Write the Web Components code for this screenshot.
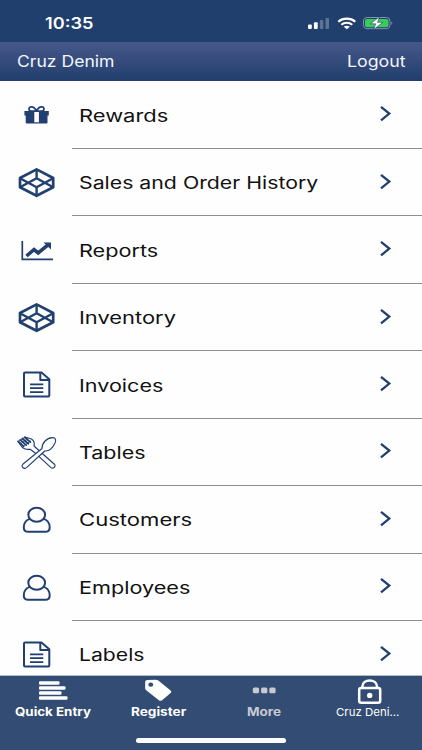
<!DOCTYPE html>
<html lang="en">
<head>
<meta charset="utf-8">
<meta name="viewport" content="width=device-width, initial-scale=1">
<title>More</title>
<style>
  body {
    margin: 0;
    background: #fefefe;
    font-family: Inter, "Liberation Sans", sans-serif;
  }
</style>
</head>
<body>
<pos-app></pos-app>

<script>
const icons = {
  gift: `<path fill="currentColor" d="M8.4 17h24.4v4.500H31.500v7a1 1 0 0 1-1 1h-19.800a1 1 0 0 1-1-1v-7H8.400z"/>
    <path fill="#fff" d="M18.300 17.800h4.600v10.500h-4.600z"/>
    <path fill="none" stroke="currentColor" stroke-width="1.800" d="M20.500 17.300c-1.500-3.500-3.500-4.600-5.500-4.400-2.500.3-2.800 3.500-.2 4.200h5.700M20.500 17.300c1.500-3.500 3.500-4.600 5.500-4.400 2.500.3 2.800 3.500.2 4.200h-5.700"/>`,
  box: `<g fill="none" stroke="currentColor" stroke-width="2.700" stroke-linejoin="round"><path d="M20.600 8.400 37.200 17v9.300L20.600 34.800 4 26.300V17z"/>
    <path stroke-width="2.400" d="M20.600 9v8.300M20.600 26.300v8M4 17.300l16.600 9 16.600-9M4 26.300l16.600-9 16.600 9"/></g>`,
  chart: `<path fill="none" stroke="currentColor" stroke-width="1.700" d="M6.300 13v18.400H37"/>
    <path fill="none" stroke="currentColor" stroke-width="3.600" d="m10.500 28 7.500-6.500 4.200 3.500 9.500-7.800"/>
    <path fill="currentColor" d="M27.500 14.600H35v6.900z"/>`,
  doc: `<g fill="none" stroke="currentColor" stroke-width="2" stroke-linejoin="round"><path d="M9 9.600h16.500l7.800 6.600v16.400q0 1-1 1H9q-1 0-1-1v-22q0-1 1-1z"/>
    <path d="M24.300 9.800v7.200h8.800"/><path stroke-width="1.700" d="M14 21.300h13.300M14 25.200h13.300M14 29.100h13.300"/></g>`,
  utensils: `<g fill="none" stroke="currentColor" stroke-width="1.150" stroke-linejoin="round" stroke-linecap="round">
    <path d="M22.800 25.400 34.700 36.400c2.500 2 5.700-1 3.700-3.200L26 22.300"/>
    <path d="M19.500 22.200 14.200 18.300c-4 .5-6.700-.6-8.700-3L2 10.300M23 19.500l-5-4.500c.8-3-.2-5.300-2.500-7L9.700 6.200"/>
    <path stroke-width="1.800" d="m2.200 10.300 5.500 5M4.200 8.900l6 5.200M6.300 7.500l6.100 5.200M8.600 6.300l5.800 4.800"/>
    <path stroke-width=".8" d="M2.500 10.500 9 6.200M5 12.500l6.800-4.600M7.500 15l7-5"/>
    <path d="M6.800 33.300 26 17.500c-.3-5 4.500-10.700 10.200-10.900 3.900-.1 4.100 3 2.600 6-2.200 4.600-5.600 7.700-10 7.400L10.500 36.600c-2.700 2-5.900-1.200-3.700-3.300z"/></g>`,
  user: `<g fill="none" stroke="currentColor" stroke-width="2"><ellipse cx="20.700" cy="16.800" rx="8.400" ry="7"/>
    <path d="M13.800 20.900c-4 1.300-6 4.700-6 8.500 0 2.900 1.600 4.400 4.600 4.400h16.700c3 0 4.600-1.500 4.600-4.400 0-3.800-2-7.200-6-8.500"/></g>`
};

const rows = [
  ['gift', 'Rewards', 89],
  ['box', 'Sales and Order History', 239],
  ['chart', 'Reports', 79],
  ['box', 'Inventory', 96.5],
  ['doc', 'Invoices', 85],
  ['utensils', 'Tables', 67],
  ['user', 'Customers', 113],
  ['user', 'Employees', 112],
  ['doc', 'Labels', 66]
];

// Text stretched horizontally to the width given in its attribute
class FitText extends HTMLElement {
  constructor() {
    super();
    this.attachShadow({ mode: 'open' });
    this.shadowRoot.innerHTML = `
      <style>
        :host { display: block; white-space: nowrap; line-height: 1.3; }
        span { display: inline-block; transform-origin: 0 50%; }
      </style>
      <span><slot></slot></span>`;
  }

  connectedCallback() {
    const width = Number(this.getAttribute('width'));
    const span = this.shadowRoot.querySelector('span');
    this.style.width = width + 'px';
    span.style.transform = `scaleX(${width / span.offsetWidth})`;
  }
}

class StatusBar extends HTMLElement {
  constructor() {
    super();
    this.attachShadow({ mode: 'open' });
    this.shadowRoot.innerHTML = `
      <style>
        :host {
          display: flex;
          justify-content: space-between;
          align-items: center;
          height: 42px;
          padding: 4px 28px 0 45px;
          box-sizing: border-box;
          background: #213f6c;
          color: #fff;
          font-size: 15.5px;
          font-weight: 600;
        }
        svg { display: block; }
        fit-text { padding-top: 1.5px; }
      </style>
      <fit-text width="48">10:35</fit-text>
      <svg width="87" height="14" viewBox="0 0 87 14">
        <g fill="#fff">
          <rect x="1" y="8.500" width="3.800" height="4.500" rx="1"/>
          <rect x="6.900" y="6.300" width="3.800" height="6.700" rx="1"/>
          <rect x="12.800" y="4" width="3.500" height="9" rx="1" opacity=".28"/>
          <rect x="18.500" y="2" width="3.500" height="11" rx="1" opacity=".28"/>
        </g>
        <g fill="none" stroke="#fff" stroke-width="2.100">
          <path d="M31.300 5.700c4.700-4.100 12.200-4.100 17 0"/>
          <path d="M34.300 8.700c3.200-2.600 7.800-2.600 11 0"/>
        </g>
        <path fill="#fff" d="M36.700 10.800c1.900-1.400 4.300-1.400 6.200 0l-3.100 2.400z"/>
        <rect x="56.500" y="1.500" width="26.500" height="11.200" rx="3.500" fill="none" stroke="#8294ae"/>
        <rect x="58" y="2.900" width="23.500" height="8.400" rx="2" fill="#39cb5b"/>
        <path d="M84.300 5.300q2 1.800 0 3.600z" fill="#8294ae"/>
        <path d="m72.500.8-9 7h5.200l-2 5.700 9.200-7.200h-5.300z" fill="#fff" stroke="#213f6c" stroke-width=".6"/>
      </svg>`;
  }
}

class TitleBar extends HTMLElement {
  constructor() {
    super();
    this.attachShadow({ mode: 'open' });
    this.shadowRoot.innerHTML = `
      <style>
        :host {
          display: flex;
          justify-content: space-between;
          align-items: center;
          height: 39px;
          padding: 2px 17px 0;
          box-sizing: border-box;
          background: linear-gradient(#46588a, #213e6c);
          color: #f4f6fb;
          font-size: 15.5px;
        }
      </style>
      <fit-text width="97.500">Cruz Denim</fit-text>
      <fit-text width="58.500">Logout</fit-text>`;
  }
}

class MenuRow extends HTMLElement {
  constructor() {
    super();
    this.attachShadow({ mode: 'open' });
    this.shadowRoot.innerHTML = `
      <style>
        :host { display: flex; height: 67.430px; color: #213f70; }
        .icon { width: 56px; padding: 12px 0 0 16px; flex: none; }
        svg { display: block; overflow: visible; }
        .body {
          flex: 1;
          display: flex;
          align-items: center;
          justify-content: space-between;
          box-sizing: border-box;
          border-bottom: 1px solid #8e8e92;
          padding: 0 30px 0 7px;
        }
        .label { color: #111; font-size: 17px; padding-top: 2.200px; }
      </style>
      <div class="icon"><svg width="42" height="42" viewBox="0 0 42 42">${icons[this.getAttribute('icon')]}</svg></div>
      <div class="body">
        <div class="label"><slot></slot></div>
        <svg width="13" height="17" viewBox="0 0 13 17"><path d="m2 .8 8.300 6.800L2 14.400" fill="none" stroke="currentColor" stroke-width="2.300"/></svg>
      </div>`;
  }
}

class TabItem extends HTMLElement {
  constructor() {
    super();
    this.attachShadow({ mode: 'open' });
    this.shadowRoot.innerHTML = `
      <style>
        :host {
          display: flex;
          flex-direction: column;
          align-items: center;
          color: #fff;
          font-size: 11.5px;
          font-weight: 700;
        }
        :host([muted]) { color: #c7cad1; }
        :host([light]) {
          box-sizing: border-box;
          padding-right: 3px;
          font-weight: 400;
          font-size: 11px;
        }
        .icon { height: 29px; }
      </style>
      <div class="icon"><slot name="icon"></slot></div>
      <slot></slot>`;
  }
}

class TabBar extends HTMLElement {
  constructor() {
    super();
    this.attachShadow({ mode: 'open' });
    this.shadowRoot.innerHTML = `
      <style>
        :host {
          display: flex;
          flex-direction: column;
          justify-content: space-between;
          align-items: center;
          height: 75px;
          box-sizing: border-box;
          border-top: 1px solid #b3bccb;
          padding-bottom: 7.500px;
          background: #334c74;
        }
        nav { display: grid; grid-template-columns: repeat(4, 1fr); width: 100%; }
        svg { display: block; }
        .home { width: 150px; height: 4.500px; border-radius: 3px; background: #fff; }
      </style>
      <nav>
        <tab-item>
          <svg slot="icon" width="30" height="28" viewBox="0 0 30 28" fill="currentColor">
            <rect x="1" y="5.200" width="20.500" height="3.600" rx="1"/><rect x="1" y="10.200" width="26.500" height="3.600" rx="1"/>
            <rect x="1" y="15.200" width="22.500" height="3.600" rx="1"/><rect x="1" y="20.200" width="28.500" height="3.600" rx="1"/>
          </svg>
          <fit-text width="76.500">Quick Entry</fit-text>
        </tab-item>
        <tab-item>
          <svg slot="icon" width="30" height="28" viewBox="0 0 30 28" fill="currentColor">
            <path fill-rule="evenodd" d="M2.200 5.700q.2-1.600 2-1.600l8.500-.4q1.500 0 2.600.8l12.300 10q1.600 1.300 0 2.600l-8.500 7.100q-1.600 1.300-3.200 0L3.200 14.200q-1.100-.9-1.100-2.300zM7.800 6.400c-3.200 0-3.200 4.300 0 4.300s3.200-4.300 0-4.300z"/>
          </svg>
          <fit-text width="55.500">Register</fit-text>
        </tab-item>
        <tab-item muted>
          <svg slot="icon" width="30" height="28" viewBox="0 0 30 28" fill="currentColor">
            <rect x="3.800" y="11.500" width="6.300" height="5.800" rx="1.500"/><rect x="12.100" y="11.500" width="6.300" height="5.800" rx="1.500"/><rect x="20.300" y="11.500" width="6.300" height="5.800" rx="1.500"/>
          </svg>
          <fit-text width="34">More</fit-text>
        </tab-item>
        <tab-item light>
          <svg slot="icon" width="30" height="28" viewBox="0 0 30 28" fill="none" stroke="currentColor" stroke-width="2.500">
            <rect x="6.200" y="12" width="21" height="14.700" rx="2"/><path d="M9.400 12V10.500c0-8 14.600-8 14.600 0V12"/>
            <circle cx="16.700" cy="19.400" r="2.700" fill="currentColor" stroke="none"/>
          </svg>
          <fit-text width="63.500">Cruz Deni…</fit-text>
        </tab-item>
      </nav>
      <div class="home"></div>`;
  }
}

class PosApp extends HTMLElement {
  constructor() {
    super();
    this.attachShadow({ mode: 'open' });
    this.shadowRoot.innerHTML = `
      <style>
        :host { display: flex; flex-direction: column; height: 750px; overflow: hidden; }
        status-bar, title-bar, tab-bar { flex: none; }
        main { flex: 1; min-height: 0; overflow: hidden; padding-top: .6px; box-sizing: border-box; }
      </style>
      <status-bar></status-bar>
      <title-bar></title-bar>
      <main>
        ${rows.map(([icon, label, width]) => `<menu-row icon="${icon}"><fit-text width="${width}">${label}</fit-text></menu-row>`).join('')}
      </main>
      <tab-bar></tab-bar>`;
  }
}

customElements.define('status-bar', StatusBar);
customElements.define('title-bar', TitleBar);
customElements.define('menu-row', MenuRow);
customElements.define('tab-item', TabItem);
customElements.define('tab-bar', TabBar);
customElements.define('pos-app', PosApp);
// last, so the text is measured once everything round it is laid out
customElements.define('fit-text', FitText);
</script>
</body>
</html>
